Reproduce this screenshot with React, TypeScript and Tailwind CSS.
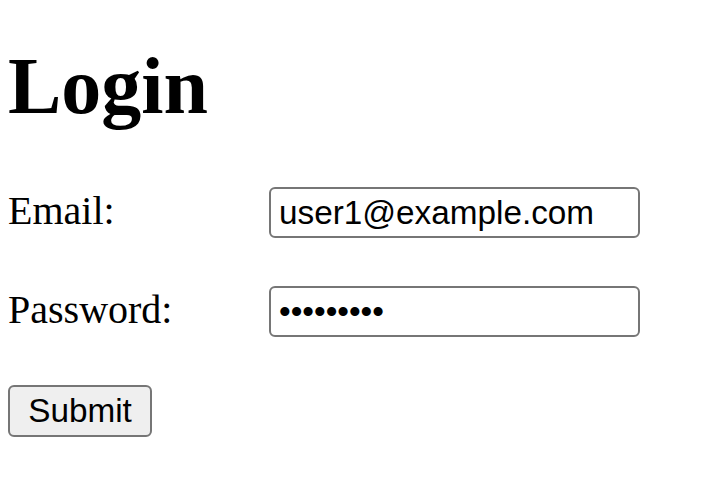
export default function App() {
  return (
    <div className="min-h-screen bg-white px-[8px] text-black font-['Liberation_Serif',serif]">
      <h1 className="pt-[40px] text-[80px] font-bold leading-[92px]">Login</h1>
      <form className="mt-[55px] flex flex-col" onSubmit={(e) => e.preventDefault()}>
        <div className="flex h-[51px] items-center">
          <label htmlFor="email" className="w-[261px] pb-[4px] text-[40px] leading-none">
            Email:
          </label>
          <input
            id="email"
            type="email"
            defaultValue="user1@example.com"
            className="h-[51px] w-[371px] rounded-[6px] border-2 border-[#767676] px-[8px] font-['Liberation_Sans',Arial,sans-serif] text-[33.3px] outline-none"
          />
        </div>
        <div className="mt-[48px] flex h-[51px] items-center">
          <label htmlFor="password" className="w-[261px] pb-[4px] text-[40px] leading-none">
            Password:
          </label>
          <input
            id="password"
            type="password"
            defaultValue="password1"
            className="h-[51px] w-[371px] rounded-[6px] border-2 border-[#767676] px-[8px] font-['Liberation_Sans',Arial,sans-serif] text-[33.3px] outline-none"
          />
        </div>
        <div className="mt-[48px]">
          <button
            type="submit"
            className="h-[52px] w-[144px] rounded-[6px] border-2 border-[#767676] bg-[#efefef] font-['Liberation_Sans',Arial,sans-serif] text-[33.3px] leading-none"
          >
            Submit
          </button>
        </div>
      </form>
    </div>
  )
}
